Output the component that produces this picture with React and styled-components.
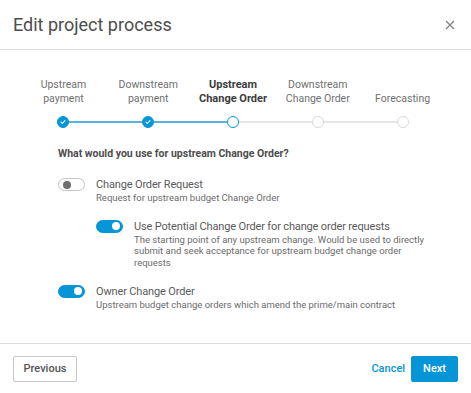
import styled, { createGlobalStyle } from "styled-components";

const GlobalStyle = createGlobalStyle`
    html, body {
        margin: 0;
        padding: 0;
        background: #fff;
    }
    body {
        font-family: Roboto, "Liberation Sans", sans-serif;
    }
`;

const Modal = styled.div`
    width: 471px;
    height: 393px;
    display: flex;
    flex-direction: column;
    background: #fff;
    box-sizing: border-box;
`;

const Header = styled.div`
    height: 49px;
    padding: 0 13px;
    display: flex;
    align-items: center;
    justify-content: space-between;
    border-bottom: 1px solid #dcdcdc;
`;

const Title = styled.h1`
    margin: 0;
    font-size: 18px;
    font-weight: 400;
    color: #4d4d4d;
`;

const CloseButton = styled.button`
    border: none;
    background: none;
    padding: 0;
    margin-right: 3px;
    display: flex;
    color: #808080;
`;

const Body = styled.div`
    flex: 1;
    padding-top: 28px;
`;

const Stepper = styled.div`
    display: flex;
    margin: 0 26px 0 21px;
`;

const Step = styled.div`
    flex: 1;
    display: flex;
    flex-direction: column;
    align-items: center;
`;

const StepLabel = styled.div`
    font-size: ${p => p.$current ? "11px" : "10.5px"};
    line-height: 14px;
    text-align: center;
    color: ${p => p.$current ? "#3c3c3c" : "#707070"};
    font-weight: ${p => p.$current ? 700 : 400};
    white-space: nowrap;
`;

const Track = styled.div`
    align-self: stretch;
    display: flex;
    align-items: center;
    margin-top: 10px;
`;

const Line = styled.div`
    flex: 1;
    height: 2px;
    background: ${p => p.$hidden ? "transparent" : p.$done ? "#5bb1e0" : "#e6e6e6"};
`;

const Dot = styled.div`
    width: 12px;
    height: 12px;
    border-radius: 50%;
    box-sizing: border-box;
    display: flex;
    align-items: center;
    justify-content: center;
    background: ${p => p.$state === "done" ? "#0696d7" : "#fff"};
    border: 1.5px solid ${p => p.$state === "todo" ? "#d9d9d9" : "#0696d7"};
`;

const Section = styled.div`
    padding: 18px 0 0 58px;
`;

const Question = styled.div`
    font-size: 10.5px;
    line-height: 15px;
    font-weight: 700;
    color: #4d4d4d;
    margin-bottom: 16px;
`;

const OptionList = styled.div`
    display: flex;
    flex-direction: column;
    gap: 15px;
`;

const Option = styled.div`
    display: flex;
    align-items: flex-start;
    gap: 11px;
    margin-left: ${p => p.$nested ? "38px" : "0"};
    padding-right: 40px;
`;

const Toggle = styled.span`
    flex: none;
    position: relative;
    width: 27px;
    height: 13px;
    margin-top: 1px;
    border-radius: 7px;
    box-sizing: border-box;
    background: ${p => p.$on ? "#0696d7" : "#fff"};
    border: 1px solid ${p => p.$on ? "#0696d7" : "#c4c4c4"};

    &::after {
        content: "";
        position: absolute;
        top: 1.5px;
        left: ${p => p.$on ? "14.5px" : "3.5px"};
        width: 8px;
        height: 8px;
        border-radius: 50%;
        background: ${p => p.$on ? "#fff" : "#6f6f6f"};
    }
`;

const OptionText = styled.div`
    display: flex;
    flex-direction: column;
`;

const OptionTitle = styled.div`
    font-size: 11px;
    line-height: 15px;
    letter-spacing: -0.15px;
    color: #5a5a5a;
`;

const OptionDesc = styled.div`
    font-size: 9.5px;
    line-height: 11.7px;
    color: #6b6b6b;
`;

const Footer = styled.div`
    height: 49px;
    padding: 0 13px;
    border-top: 1px solid #dcdcdc;
    display: flex;
    align-items: center;
    justify-content: space-between;
`;

const Actions = styled.div`
    display: flex;
    align-items: center;
    gap: 6px;
`;

const Button = styled.button`
    height: 26px;
    padding: 0 ${p => p.$primary ? "11px" : "9.5px"};
    border-radius: 2px;
    font-family: inherit;
    font-size: 11px;
    font-weight: 500;
    cursor: pointer;
    background: ${p => p.$primary ? "#0696d7" : "#fff"};
    color: ${p => p.$primary ? "#fff" : "#555"};
    border: 1px solid ${p => p.$primary ? "#0696d7" : "#c8c8c8"};
`;

const LinkButton = styled.button`
    border: none;
    background: none;
    padding: 0;
    font-family: inherit;
    font-size: 11px;
    font-weight: 500;
    color: #0696d7;
    cursor: pointer;
`;

const steps = [
    ["Upstream", "payment"],
    ["Downstream", "payment"],
    ["Upstream", "Change Order"],
    ["Downstream", "Change Order"],
    ["", "Forecasting"],
];
const current = 2;

const options = [
    {
        title: "Change Order Request",
        desc: "Request for upstream budget Change Order",
        on: false,
    },
    {
        title: "Use Potential Change Order for change order requests",
        desc: "The starting point of any upstream change. Would be used to directly submit and seek acceptance for upstream budget change order requests",
        on: true,
        nested: true,
    },
    {
        title: "Owner Change Order",
        desc: "Upstream budget change orders which amend the prime/main contract",
        on: true,
    },
];

function Check() {
    return (
        <svg width="6" height="6" viewBox="0 0 6 6">
            <path d="M1 3.2 L2.4 4.5 L5 1.6" fill="none" stroke="#fff" strokeWidth="1.1" strokeLinecap="round" strokeLinejoin="round" />
        </svg>
    );
}

export default function App() {
    return (
        <Modal>
            <GlobalStyle />
            <Header>
                <Title>Edit project process</Title>
                <CloseButton aria-label="Close">
                    <svg width="10" height="10" viewBox="0 0 10 10">
                        <path d="M1 1 L9 9 M9 1 L1 9" stroke="currentColor" strokeWidth="1.2" />
                    </svg>
                </CloseButton>
            </Header>
            <Body>
                <Stepper>
                    {steps.map((label, i) => {
                        const state = i < current ? "done" : i === current ? "current" : "todo";
                        return (
                            <Step key={i}>
                                <StepLabel $current={i === current}>
                                    {label[0] || "\u00a0"}<br />{label[1]}
                                </StepLabel>
                                <Track>
                                    <Line $hidden={i === 0} $done={i <= current} />
                                    <Dot $state={state}>{state === "done" && <Check />}</Dot>
                                    <Line $hidden={i === steps.length - 1} $done={i < current} />
                                </Track>
                            </Step>
                        );
                    })}
                </Stepper>
                <Section>
                    <Question>What would you use for upstream Change Order?</Question>
                    <OptionList>
                        {options.map(o => (
                            <Option key={o.title} $nested={o.nested}>
                                <Toggle $on={o.on} />
                                <OptionText>
                                    <OptionTitle>{o.title}</OptionTitle>
                                    <OptionDesc>{o.desc}</OptionDesc>
                                </OptionText>
                            </Option>
                        ))}
                    </OptionList>
                </Section>
            </Body>
            <Footer>
                <Button>Previous</Button>
                <Actions>
                    <LinkButton>Cancel</LinkButton>
                    <Button $primary>Next</Button>
                </Actions>
            </Footer>
        </Modal>
    );
}
